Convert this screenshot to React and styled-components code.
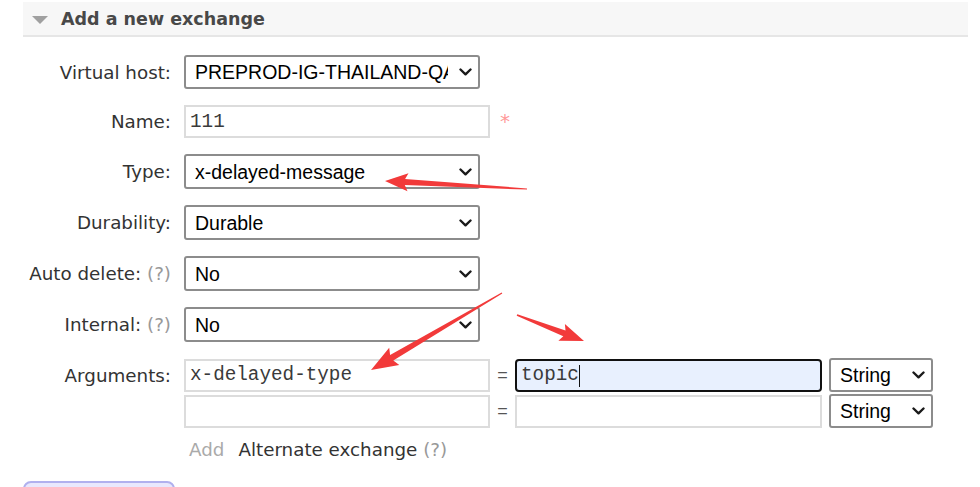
import React from 'react';
import styled, { createGlobalStyle } from 'styled-components';

const GlobalStyle = createGlobalStyle`
  html, body {
    margin: 0;
    padding: 0;
    background: #fff;
  }
  body {
    font-family: 'DejaVu Sans', Verdana, sans-serif;
    color: #333;
  }
`;

const Page = styled.div`
  position: relative;
  width: 980px;
  height: 487px;
  overflow: hidden;
  padding-top: 2px;
  box-sizing: border-box;
`;

const SectionHeader = styled.div`
  margin-left: 23px;
  width: 945px;
  height: 35px;
  background: #f7f7f7;
  border-bottom: 2px solid #e6e6e6;
  display: flex;
  align-items: center;
  gap: 13px;
  padding-left: 9px;
  box-sizing: border-box;
`;

const Toggle = styled.span`
  width: 0;
  height: 0;
  border-left: 8px solid transparent;
  border-right: 8px solid transparent;
  border-top: 8px solid #a0a0a0;
  margin-top: 2px;
`;

const Title = styled.h2`
  margin: 0;
  font-size: 17.5px;
  font-weight: bold;
  color: #484848;
`;

const Form = styled.div`
  display: grid;
  grid-template-columns: 171px auto;
  column-gap: 13px;
  row-gap: 16px;
  align-items: center;
  margin-top: 18px;
`;

const Label = styled.label`
  justify-self: end;
  align-self: ${(p) => (p.$top ? 'start' : 'center')};
  line-height: ${(p) => (p.$top ? '36px' : 'normal')};
  font-size: 18.3px;
  color: #333;
  white-space: nowrap;
`;

const Help = styled.span`
  color: #999;
`;

const SelectWrap = styled.div`
  position: relative;
  width: ${(p) => p.$w}px;
  height: ${(p) => p.$h || 35}px;
`;

const NativeSelect = styled.select`
  appearance: none;
  width: 100%;
  height: 100%;
  box-sizing: border-box;
  border: 2px solid #8c8c8c;
  border-radius: 3px;
  background: #fff;
  padding: 0 30px 0 9px;
  font-family: 'Liberation Sans', Arial, sans-serif;
  font-size: 19.5px;
  color: #000;
  outline: none;
`;

const Chevron = styled.svg`
  position: absolute;
  right: 8px;
  top: 50%;
  margin-top: -4px;
  pointer-events: none;
`;

const InputWrap = styled.div`
  position: relative;
  width: ${(p) => p.$w || 306}px;
  height: 33px;
`;

const TextInput = styled.input`
  width: 100%;
  height: 100%;
  box-sizing: border-box;
  border: 2px solid ${(p) => (p.$focus ? '#111' : '#dcdcdc')};
  border-radius: ${(p) => (p.$focus ? '4px' : '0')};
  background: ${(p) => (p.$focus ? '#e8f0fe' : '#fff')};
  padding: 0 4px;
  font-family: 'Liberation Mono', 'Courier New', monospace;
  font-size: 19.3px;
  color: #3a3a3a;
  outline: none;
`;

// text cursor drawn after the value of the focused field
const Caret = styled.span`
  position: absolute;
  left: ${(p) => p.$x}px;
  top: 6px;
  width: 1px;
  height: 22px;
  background: #111;
`;

const NameField = styled.div`
  display: flex;
  align-items: flex-start;
  gap: 10px;
`;

const Required = styled.span`
  color: #f99;
  font-size: 20px;
  line-height: 20px;
  margin-top: 6px;
`;

const ArgsGrid = styled.div`
  display: grid;
  grid-template-columns: 306px 25px 307px 104px;
  row-gap: 2px;
  align-items: center;
  & > :nth-child(4n) {
    margin-left: 7px;
  }
`;

const Eq = styled.span`
  font-family: 'Liberation Sans', Arial, sans-serif;
  font-size: 18px;
  color: #555;
  text-align: center;
`;

const AddLine = styled.div`
  grid-column: 2;
  margin-top: -5px;
  padding-left: 5px;
  font-size: 18.3px;
  display: flex;
  gap: 14px;
`;

const Muted = styled.span`
  color: #aaa;
`;

const Submit = styled.div`
  margin: 21px 0 0 23px;
  width: 152px;
  height: 30px;
  box-sizing: border-box;
  background: #e8e8fd;
  border: 2px solid #b0b0ee;
  border-radius: 8px;
`;

const Overlay = styled.svg`
  position: absolute;
  left: 0;
  top: 0;
  pointer-events: none;
`;

function ChevronIcon() {
  return (
    <Chevron width="13" height="8" viewBox="0 0 13 8">
      <path d="M1.5 1.5 L6.5 6.3 L11.5 1.5" fill="none" stroke="#1a1a1a" strokeWidth="2.4" strokeLinecap="round" strokeLinejoin="round" />
    </Chevron>
  );
}

function Select({ value, width, height }) {
  return (
    <SelectWrap $w={width} $h={height}>
      <NativeSelect defaultValue={value}>
        <option>{value}</option>
      </NativeSelect>
      <ChevronIcon />
    </SelectWrap>
  );
}

function Field({ value, width, focus }) {
  return (
    <InputWrap $w={width}>
      <TextInput $focus={focus} defaultValue={value} />
      {focus && <Caret $x={6 + (value || '').length * 11.6} />}
    </InputWrap>
  );
}

// tapered shaft with a triangular head, from tail to tip
function arrowPoints([tx, ty], [px, py], head, half, s1, s0) {
  const len = Math.hypot(px - tx, py - ty);
  const dx = (px - tx) / len;
  const dy = (py - ty) / len;
  const nx = -dy;
  const ny = dx;
  const bx = px - dx * head;
  const by = py - dy * head;
  const pts = [
    [tx + nx * s0, ty + ny * s0],
    [bx + nx * s1, by + ny * s1],
    [bx - dx * 3 + nx * half, by - dy * 3 + ny * half],
    [px, py],
    [bx - dx * 3 - nx * half, by - dy * 3 - ny * half],
    [bx - nx * s1, by - ny * s1],
    [tx - nx * s0, ty - ny * s0],
  ];
  return pts.map((p) => p.map((v) => v.toFixed(1)).join(',')).join(' ');
}

const arrows = [
  { tail: [527, 189], tip: [385, 181], head: 20, half: 9, s1: 3, s0: 0.6 },
  { tail: [502, 293], tip: [371, 370], head: 24, half: 10, s1: 3.2, s0: 0.6 },
  { tail: [517, 315], tip: [584, 341], head: 21, half: 9, s1: 3, s0: 0.8 },
];

export default function App() {
  return (
    <>
      <GlobalStyle />
      <Page>
        <SectionHeader>
          <Toggle />
          <Title>Add a new exchange</Title>
        </SectionHeader>

        <Form>
          <Label>Virtual host:</Label>
          <Select value="PREPROD-IG-THAILAND-QA" width={296} height={34} />

          <Label>Name:</Label>
          <NameField>
            <Field value="111" />
            <Required>*</Required>
          </NameField>

          <Label>Type:</Label>
          <Select value="x-delayed-message" width={296} />

          <Label>Durability:</Label>
          <Select value="Durable" width={296} />

          <Label>
            Auto delete: <Help>(?)</Help>
          </Label>
          <Select value="No" width={296} />

          <Label>
            Internal: <Help>(?)</Help>
          </Label>
          <Select value="No" width={296} />

          <Label $top>Arguments:</Label>
          <ArgsGrid>
            <Field value="x-delayed-type" />
            <Eq>=</Eq>
            <Field value="topic" width={307} focus />
            <Select value="String" width={104} height={34} />
            <Field />
            <Eq>=</Eq>
            <Field width={307} />
            <Select value="String" width={104} height={34} />
          </ArgsGrid>

          <AddLine>
            <Muted>Add</Muted>
            <span>
              Alternate exchange <Help>(?)</Help>
            </span>
          </AddLine>
        </Form>

        <Submit />

        <Overlay width="980" height="487" viewBox="0 0 980 487">
          {arrows.map((a, i) => (
            <polygon key={i} points={arrowPoints(a.tail, a.tip, a.head, a.half, a.s1, a.s0)} fill="#f23a3a" />
          ))}
        </Overlay>
      </Page>
    </>
  );
}
